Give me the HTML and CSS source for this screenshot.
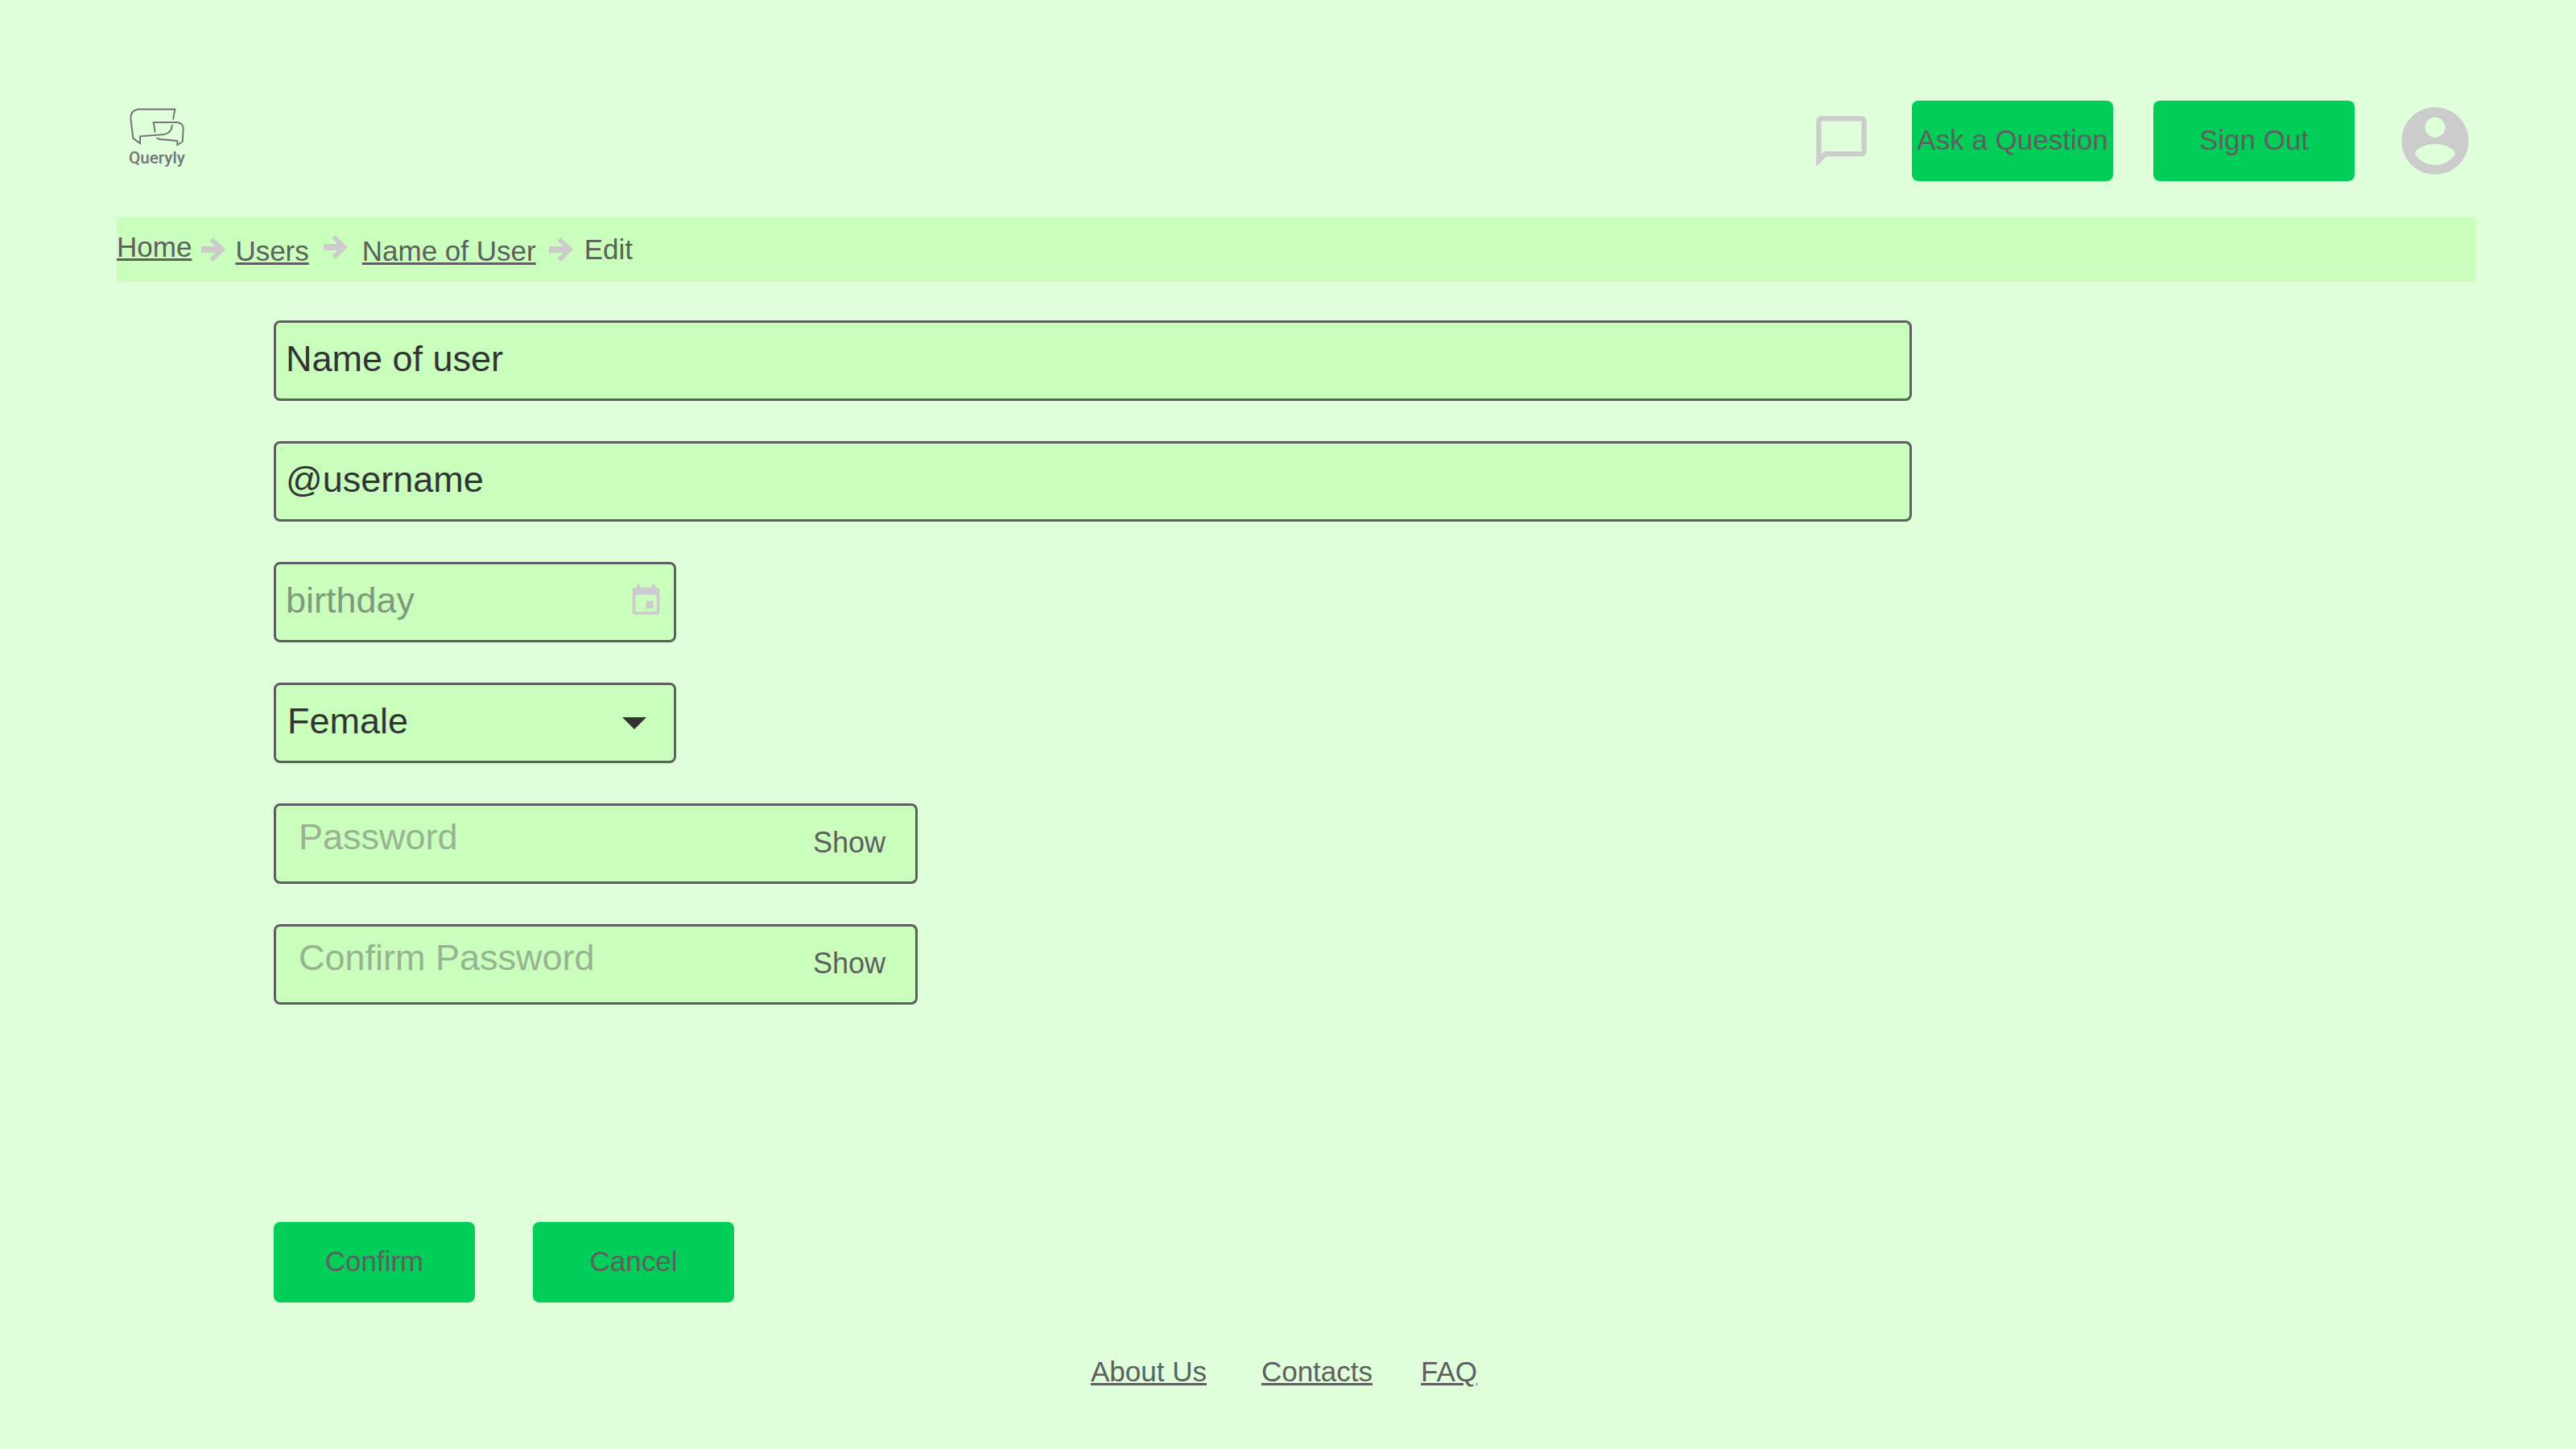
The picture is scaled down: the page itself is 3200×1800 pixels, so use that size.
FILE: index.html
```html
<!DOCTYPE html>
<html lang="en">
<head>
<meta charset="utf-8">
<meta name="viewport" content="width=device-width, initial-scale=1">
<title>Queryly – Edit user</title>
<link rel="stylesheet" href="styles.css">
</head>
<body>
<header class="header">
  <a class="logo" href="#" aria-label="Queryly">
    <svg class="logo-mark" viewBox="45 45 300 300" aria-hidden="true">
      <g fill="none" stroke="#757575" stroke-width="6">
        <path d="M255 115 L262 77 H124 Q97 82 97 110 L106 185 L132 204 V178 L222 171 Q250 165 252 135"/>
        <path d="M188 163 L182 126 H272 Q294 130 293 152 L290 198 L271 210 V195 L206 189 L193 184"/>
      </g>
      <text class="logo-text" x="90" y="280">Queryly</text>
    </svg>
  </a>
  <nav class="actions" aria-label="Account">
    <a class="icon-link" href="#" aria-label="Messages">
      <svg class="icon-chat" viewBox="0 0 24 24"><path d="M20 2H4c-1.100 0-2 .9-2 2v18l4-4h14c1.100 0 2-.9 2-2V4c0-1.100-.9-2-2-2zm0 14H5.200L4 17.200V4h16v12z"/></svg>
    </a>
    <button class="button" type="button">Ask a Question</button>
    <button class="button" type="button">Sign Out</button>
    <a class="icon-link" href="#" aria-label="Profile">
      <svg class="icon-account" viewBox="0 0 24 24"><path d="M12 2C6.480 2 2 6.480 2 12s4.480 10 10 10 10-4.480 10-10S17.520 2 12 2zm0 3c1.660 0 3 1.340 3 3s-1.340 3-3 3-3-1.340-3-3 1.340-3 3-3zm0 14.200c-2.500 0-4.710-1.280-6-3.220.03-1.990 4-3.080 6-3.080 1.990 0 5.970 1.090 6 3.080-1.290 1.940-3.500 3.220-6 3.220z"/></svg>
    </a>
  </nav>
</header>

<nav class="breadcrumb" aria-label="Breadcrumb">
  <div class="trail">
    <a class="crumb crumb-home" href="#">Home</a>
    <svg class="arrow" viewBox="0 0 30 30" aria-hidden="true"><path d="M0 11H17.500L10.500 4L14.500 0L30 15L14.500 30L10.500 26L17.500 19H0Z"/></svg>
    <a class="crumb crumb-sub" href="#">Users</a>
    <svg class="arrow arrow-wide" viewBox="0 0 30 30" aria-hidden="true"><path d="M0 11H17.500L10.500 4L14.500 0L30 15L14.500 30L10.500 26L17.500 19H0Z"/></svg>
    <a class="crumb crumb-sub" href="#">Name of User</a>
    <svg class="arrow arrow-last" viewBox="0 0 30 30" aria-hidden="true"><path d="M0 11H17.500L10.500 4L14.500 0L30 15L14.500 30L10.500 26L17.500 19H0Z"/></svg>
    <span class="crumb" aria-current="page">Edit</span>
  </div>
</nav>

<main class="main">
  <form class="form">
    <div class="field">
      <input class="control" type="text" value="Name of user" aria-label="Name">
    </div>
    <div class="field">
      <input class="control" type="text" value="@username" aria-label="Username">
    </div>
    <div class="field field-short">
      <input class="control control-date" type="text" placeholder="birthday" aria-label="Birthday">
      <svg class="icon-date" viewBox="0 0 24 24" aria-hidden="true"><path d="M17 12h-5v5h5v-5zM16 1v2H8V1H6v2H5c-1.110 0-1.990.9-1.990 2L3 19c0 1.100.89 2 2 2h14c1.100 0 2-.9 2-2V5c0-1.100-.9-2-2-2h-1V1h-2zm3 18H5V8h14v11z"/></svg>
    </div>
    <div class="field field-short">
      <select class="control control-select" aria-label="Gender">
        <option>Female</option>
        <option>Male</option>
      </select>
      <svg class="icon-caret" viewBox="0 0 30 15" aria-hidden="true"><path d="M0 0H30L15 15Z"/></svg>
    </div>
    <div class="field field-medium">
      <input class="control control-password" type="password" placeholder="Password" aria-label="Password">
      <button class="show" type="button">Show</button>
    </div>
    <div class="field field-medium">
      <input class="control control-password" type="password" placeholder="Confirm Password" aria-label="Confirm password">
      <button class="show" type="button">Show</button>
    </div>
    <div class="form-actions">
      <button class="button" type="button">Confirm</button>
      <button class="button" type="button">Cancel</button>
    </div>
  </form>
</main>

<footer class="footer">
  <a class="crumb footer-first" href="#">About Us</a>
  <a class="crumb" href="#">Contacts</a>
  <a class="crumb" href="#">FAQ</a>
</footer>
</body>
</html>
```
FILE: styles.css
```css
* {
  box-sizing: border-box;
}

body {
  margin: 0;
  min-height: 100vh;
  background: #deffda;
  color: #5f5f5f;
  font-family: "Liberation Sans", Arial, sans-serif;
  font-size: 35px;
  line-height: 40px;
}

svg {
  display: block;
}

a {
  color: inherit;
}

.header {
  display: flex;
  align-items: center;
  justify-content: space-between;
  padding: 125px 125px 45px 145px;
}

.logo-mark {
  width: 100px;
  height: 100px;
}

.logo-text {
  fill: #757575;
  font-family: Roboto, sans-serif;
  font-size: 62px;
  font-weight: 500;
}

.actions {
  display: flex;
  align-items: center;
  gap: 50px;
}

.icon-link {
  fill: #cccccc;
}

.icon-chat {
  width: 75px;
  height: 75px;
}

.icon-account {
  width: 100px;
  height: 100px;
}

.button {
  width: 250px;
  height: 100px;
  padding: 0 0 2px;
  border: 0;
  border-radius: 8px;
  background: #00ce58;
  color: #5f5f5f;
  font: inherit;
  white-space: nowrap;
}

.breadcrumb {
  margin: 0 125px 0 145px;
  padding: 17px 0 18px;
  background: #c9febd;
}

.trail {
  display: flex;
  align-items: center;
  height: 45px;
}

.crumb-home {
  align-self: flex-start;
}

.crumb-sub {
  align-self: flex-end;
}

.arrow {
  width: 30px;
  height: 30px;
  margin: 0 12px;
  fill: #cccccc;
}

.arrow-wide {
  align-self: flex-start;
  margin: 5px 18px 0;
}

.arrow-last {
  margin: 0 14px 0 16px;
}

.main {
  padding: 48px 825px 0 340px;
}

.form {
  display: flex;
  flex-direction: column;
  gap: 50px;
}

.field {
  display: flex;
  align-items: center;
  height: 100px;
  border: 3px solid #5f5f5f;
  border-radius: 8px;
  background: #c9febd;
}

.field-short {
  width: 500px;
}

.field-medium {
  width: 800px;
}

.control {
  flex: 1;
  min-width: 0;
  height: 94px;
  padding: 0 12px 4px;
  border: 0;
  background: none;
  color: #333333;
  font: inherit;
  font-size: 45px;
  line-height: 52px;
  appearance: none;
}

.control::placeholder {
  color: #98b392;
  opacity: 1;
}

.control-date::placeholder {
  color: #809a7b;
}

.control-select {
  padding-left: 14px;
}

.control-password {
  padding: 0 28px 16px;
}

.icon-date {
  width: 45px;
  height: 45px;
  margin: 0 12px 4px 0;
  fill: #cccccc;
}

.icon-caret {
  width: 30px;
  height: 15px;
  margin-right: 34px;
  fill: #333333;
}

.show {
  padding: 0 0 2px;
  margin-right: 37px;
  border: 0;
  background: none;
  color: #5f5f5f;
  font: inherit;
  font-size: 36px;
}

.form-actions {
  display: flex;
  gap: 72px;
  margin-top: 220px;
}

.footer {
  display: flex;
  justify-content: center;
  gap: 60px;
  padding: 66px 10px 60px 0;
}

.footer-first {
  margin-right: 8px;
}
```
